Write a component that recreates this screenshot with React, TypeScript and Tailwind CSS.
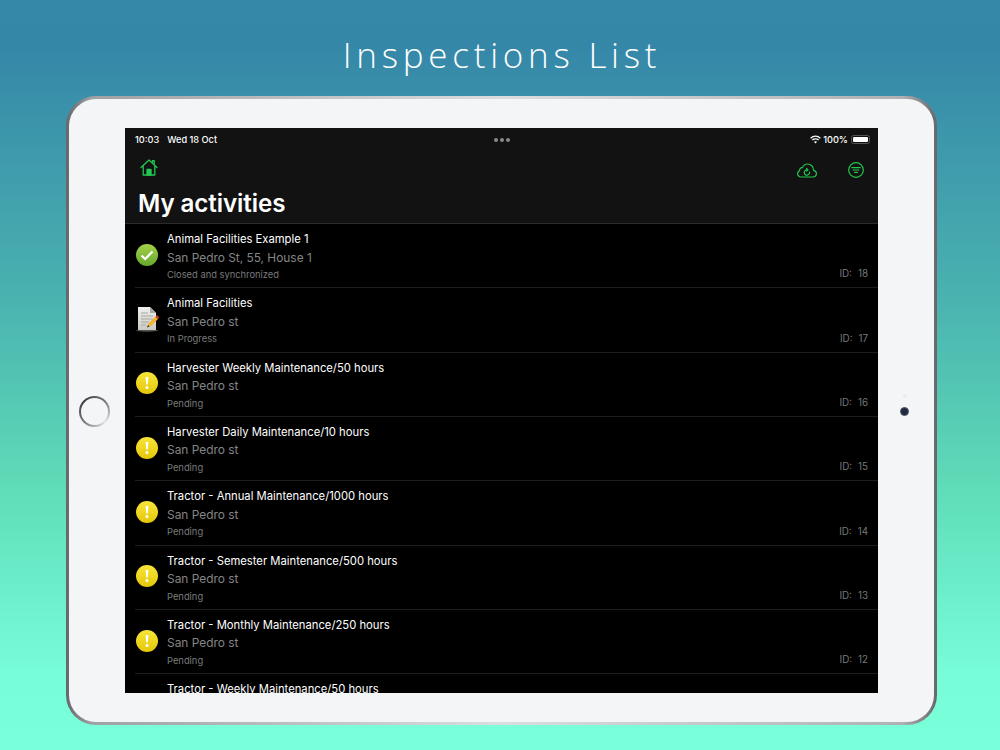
const rows = [
  { t: "Animal Facilities Example 1", a: "San Pedro St, 55, House 1", s: "Closed and synchronized", id: 18, k: "ok" },
  { t: "Animal Facilities", a: "San Pedro st", s: "In Progress", id: 17, k: "doc" },
  { t: "Harvester Weekly Maintenance/50 hours", a: "San Pedro st", s: "Pending", id: 16, k: "warn" },
  { t: "Harvester Daily Maintenance/10 hours", a: "San Pedro st", s: "Pending", id: 15, k: "warn" },
  { t: "Tractor - Annual Maintenance/1000 hours", a: "San Pedro st", s: "Pending", id: 14, k: "warn" },
  { t: "Tractor - Semester Maintenance/500 hours", a: "San Pedro st", s: "Pending", id: 13, k: "warn" },
  { t: "Tractor - Monthly Maintenance/250 hours", a: "San Pedro st", s: "Pending", id: 12, k: "warn" },
  { t: "Tractor - Weekly Maintenance/50 hours", a: "San Pedro st", s: "Pending", id: 11, k: "warn" },
];

function OkIcon() {
  return (
    <svg width="22" height="22" viewBox="0 0 22 22">
      <defs>
        <linearGradient id="okg" x1="0" y1="0" x2="0" y2="1">
          <stop offset="0" stopColor="#a4d24a" />
          <stop offset="1" stopColor="#66a82c" />
        </linearGradient>
      </defs>
      <circle cx="11" cy="11" r="11" fill="url(#okg)" />
      <path d="M5.5 11.5 L9.2 15 L16.5 7.5" fill="none" stroke="#fff" strokeWidth="2.2" />
    </svg>
  );
}

function WarnIcon() {
  return (
    <svg width="22" height="22" viewBox="0 0 22 22">
      <defs>
        <linearGradient id="wg" x1="0" y1="0" x2="0" y2="1">
          <stop offset="0" stopColor="#f7e53a" />
          <stop offset="1" stopColor="#e6c708" />
        </linearGradient>
      </defs>
      <circle cx="11" cy="11" r="11" fill="url(#wg)" />
      <path d="M9.6 5 H12.4 L11.8 12.6 H10.2 Z" fill="#fff" />
      <circle cx="11" cy="15.4" r="1.5" fill="#fff" />
    </svg>
  );
}

function DocIcon() {
  return (
    <svg width="24" height="26" viewBox="0 0 24 26">
      <defs>
        <linearGradient id="dg" x1="0" y1="0" x2="0" y2="1">
          <stop offset="0" stopColor="#f0f0ee" />
          <stop offset="1" stopColor="#c9c9c4" />
        </linearGradient>
      </defs>
      <ellipse cx="11" cy="24.5" rx="11" ry="1.2" fill="#55554f" />
      <path d="M2 1 H14 L20 7 V24 H2 Z" fill="url(#dg)" />
      <path d="M14 1 L20 7 H14 Z" fill="#a9a9a4" />
      <path d="M5 7 H12 M5 10 H17 M5 13 H17 M5 16 H13 M5 19 H10" stroke="#a8a8a2" strokeWidth="1" />
      <path d="M11 21.5 L12.5 17.5 L19.5 10.5 L22 13 L15 20 Z" fill="#f2b42e" />
      <path d="M19.5 10.5 L21 9 L23.5 11.5 L22 13 Z" fill="#c8382c" />
      <path d="M11 21.5 L12 19 L13.6 20.6 Z" fill="#333" />
    </svg>
  );
}

function Home() {
  return (
    <svg width="18" height="17" viewBox="0 0 18 17" fill="none" stroke="#22c84f" strokeWidth="1.3" strokeLinejoin="round" strokeLinecap="round">
      <path d="M1 8.5 L9 1 L17 8.5" />
      <path d="M3.2 7 V16 H14.8 V7" />
      <path d="M12.5 3 V1.6 H14.2 V4.6" />
      <path d="M7 16 V10.5 H11 V16 Z" fill="#22c84f" />
    </svg>
  );
}

function Cloud() {
  return (
    <svg width="20" height="15" viewBox="0 0 20 15" fill="none" stroke="#22c84f" strokeWidth="1.2" strokeLinecap="round" strokeLinejoin="round">
      <path d="M4.5 14 H15.8 C18 14 19.4 12.4 19.4 10.6 C19.4 8.8 18.2 7.6 16.6 7.3 C16.5 3.6 13.9 1 10.6 1 C8 1 6.3 2.6 5.5 4.6 C3.4 4.4 2.6 6 2.6 7.6 C1.4 8.2 0.6 9.3 0.6 10.6 C0.6 12.6 2.4 14 4.5 14 Z" />
      <path d="M12.6 9.2 A2.7 2.7 0 1 1 10 6.8" />
      <path d="M9.6 5.4 L11 6.8 L9.6 8" />
    </svg>
  );
}

function Filter() {
  return (
    <svg width="16" height="16" viewBox="0 0 16 16" fill="none" stroke="#22c84f" strokeWidth="1.2" strokeLinecap="round">
      <circle cx="8" cy="8" r="7.3" />
      <path d="M3.8 5.6 H12.2 M5.2 8 H10.8 M6.6 10.4 H9.4" />
    </svg>
  );
}

function Wifi() {
  return (
    <svg width="11" height="9" viewBox="0 0 11 9" fill="none" stroke="#fff" strokeWidth="1.2">
      <path d="M0.6 3.2 C3.4 0.5 7.6 0.5 10.4 3.2" />
      <path d="M2.3 5 C4 3.4 7 3.4 8.7 5" />
      <path d="M5.5 8.6 L3.9 6.8 C4.8 6 6.2 6 7.1 6.8 Z" fill="#fff" stroke="none" />
    </svg>
  );
}

export default function App() {
  return (
    <div className="w-[1000px] h-[750px] overflow-hidden flex flex-col items-center bg-[linear-gradient(180deg,#3588a8_0%,#3587a8_6%,#4ab3b0_40%,#5fdcb8_65%,#78fdd9_90%,#7affdb_100%)] font-['Liberation_Sans',sans-serif]">
      <div className="h-[96px] w-full flex items-center justify-center pt-[14px] pl-[4px] text-white text-[35px] tracking-[4.75px] font-light font-['Open_Sans',sans-serif]">
        Inspections List
      </div>

      <div className="w-[871px] h-[629px] ml-[3px] p-[3px] rounded-[30px] bg-[linear-gradient(90deg,#66676b_0%,#a0a1a5_3%,#dcdde0_50%,#b0b1b4_96%,#66676b_100%)]">
        <div className="w-full h-full rounded-[27px] bg-[#f4f5f7] flex items-stretch">
          <div className="w-[56px] flex items-center justify-center">
            <div className="w-[31px] h-[31px] mr-[5px] mt-[2px] rounded-full p-[2px] bg-[conic-gradient(from_135deg,#e4e4e6,#77787c_25%,#3c3d42_50%,#77787c_75%,#e4e4e6)]">
              <div className="w-full h-full rounded-full bg-[#f4f5f7]" />
            </div>
          </div>

          <div className="w-[753px] mt-[29px] mb-[29px] bg-black flex flex-col overflow-hidden">
            <div className="h-[96px] shrink-0 bg-[#121212] border-b border-[#2b2b2b] flex flex-col text-white">
              <div className="h-[23px] shrink-0 flex items-center justify-between pl-[10px] pr-[8px] text-[9.2px] font-medium font-['Inter',sans-serif]">
                <div className="flex gap-[8px] w-[200px]">
                  <span>10:03</span>
                  <span>Wed 18 Oct</span>
                </div>
                <div className="flex gap-[2px] mr-[2px]">
                  <div className="w-[4px] h-[4px] rounded-full bg-[#8a8a8a]" />
                  <div className="w-[4px] h-[4px] rounded-full bg-[#8a8a8a]" />
                  <div className="w-[4px] h-[4px] rounded-full bg-[#8a8a8a]" />
                </div>
                <div className="flex items-center justify-end gap-[2px] w-[200px]">
                  <Wifi />
                  <span className="mr-[1px]">100%</span>
                  <div className="w-[19px] h-[9px] rounded-[2.5px] border border-[#555] p-[1px] flex">
                    <div className="flex-1 bg-white rounded-[1px]" />
                  </div>
                </div>
              </div>
              <div className="flex justify-between items-start pl-[15px] pr-[14px] h-[39px] shrink-0">
                <div className="mt-[8px]"><Home /></div>
                <div className="flex items-start gap-[31px] mt-[11px]">
                  <div className="mt-[1px]"><Cloud /></div>
                  <Filter />
                </div>
              </div>
              <div className="pl-[13px] mt-[-1px] text-[24.2px] leading-[30px] font-semibold font-['Inter',sans-serif] tracking-[-0.1px]">
                My activities
              </div>
            </div>

            {rows.map((r) => (
              <div key={r.id} className="h-[64.33px] shrink-0 flex ml-[10px] border-b border-[#1d1d1d]">
                <div className="w-[32px] shrink-0 flex items-center pl-[1px] pb-[2px]">
                  {r.k === "ok" ? <OkIcon /> : r.k === "doc" ? <DocIcon /> : <WarnIcon />}
                </div>
                <div className="flex-1 flex pr-[10px] font-['Inter',sans-serif]">
                  <div className="flex-1 flex flex-col pt-[7px]">
                    <div className="text-[11.25px] leading-[16px] text-white">{r.t}</div>
                    <div className="text-[11.9px] leading-[16px] mt-[2.5px] text-[#858585]">{r.a}</div>
                    <div className="text-[9.35px] leading-[12px] mt-[3.5px] text-[#7b7b7b]">{r.s}</div>
                  </div>
                  <div className="self-end mb-[7px] flex gap-[6px] text-[9.8px] leading-[12px] text-[#777777]">
                    <span>ID:</span>
                    <span>{r.id}</span>
                  </div>
                </div>
              </div>
            ))}
          </div>

          <div className="flex-1 flex flex-col items-center justify-center pb-[11px] pr-[3px]">
            <div className="w-[4px] h-[4px] rounded-full bg-[#eaebed] mb-[9px]" />
            <div className="w-[9px] h-[9px] rounded-full bg-[#1f2a44] border-[1.5px] border-[#55565c]" />
          </div>
        </div>
      </div>
    </div>
  );
}
